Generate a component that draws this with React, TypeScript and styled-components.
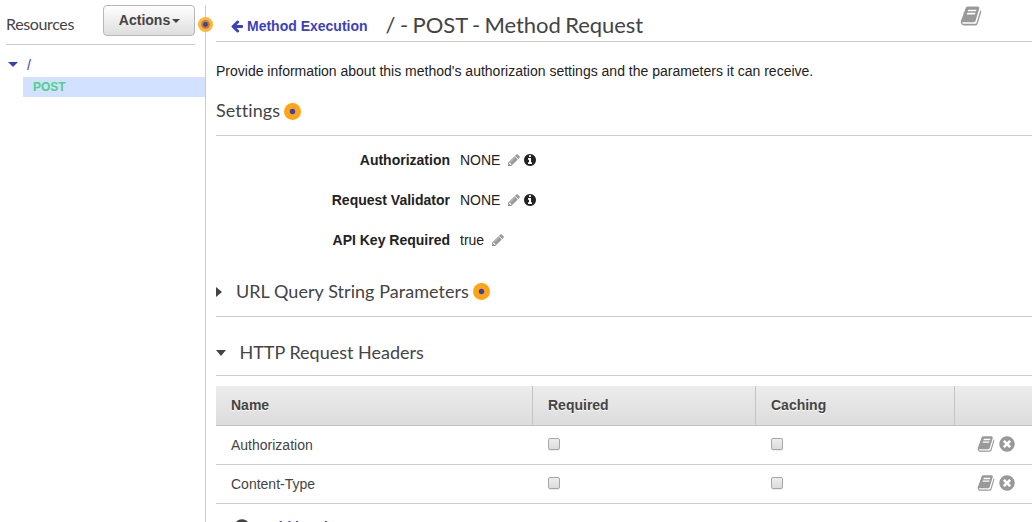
import React from 'react';
import styled, { createGlobalStyle } from 'styled-components';

const GlobalStyle = createGlobalStyle`
  * { box-sizing: border-box; }
  html, body { margin: 0; padding: 0; background: #fff; }
  body {
    font-family: "Liberation Sans", Arial, sans-serif;
    font-size: 14px;
    line-height: 20px;
    color: #222;
    overflow: hidden;
  }
`;

const Page = styled.div`
  display: flex;
  width: 100%;
  height: 522px;
  overflow: hidden;
`;

const Sidebar = styled.aside`
  width: 205px;
  flex: none;
  padding-top: 5px;
`;

const SidebarHeader = styled.div`
  display: flex;
  justify-content: space-between;
  align-items: flex-start;
  height: 40px;
  margin: 0 10px 0 6px;
  border-bottom: 1px solid #ccc;
`;

const SidebarTitle = styled.div`
  font: 16px/20px Lato, sans-serif;
  letter-spacing: -0.36px;
  color: #444;
  padding-top: 9px;
`;

const ActionsButton = styled.button`
  display: flex;
  align-items: center;
  justify-content: center;
  gap: 2px;
  width: 92px;
  height: 31px;
  padding: 0 0 2px 1px;
  border: 1px solid #b8b8b8;
  border-radius: 4px;
  background: linear-gradient(#fff, #dedede);
  font: bold 14px/20px "Liberation Sans", Arial, sans-serif;
  color: #444;

  svg { margin-top: 3px; }
`;

const Tree = styled.div`
  padding-top: 9px;
`;

const TreeRoot = styled.div`
  display: flex;
  align-items: center;
  gap: 9px;
  height: 23px;
  padding: 0 0 2px 8px;
  color: #3b3fb6;
  font-size: 14px;
`;

const TreeLeaf = styled.div`
  height: 20px;
  margin-left: 23px;
  padding-left: 10px;
  background: #d1e1ff;
  color: #4dd08a;
  font-weight: bold;
  font-size: 12px;
  line-height: 20px;
`;

const Divider = styled.div`
  position: relative;
  flex: none;
  width: 1px;
  margin-top: 5px;
  background: #ccc;
`;

const DividerDot = styled.div`
  position: absolute;
  left: -7px;
  top: 12px;
  display: flex;
`;

const Main = styled.main`
  flex: 1;
  min-width: 0;
  padding-left: 10px;
`;

const TitleBar = styled.header`
  display: flex;
  align-items: flex-start;
  height: 42px;
  padding: 0 50px 0 14px;
  border-bottom: 1px solid #ccc;
`;

const BackLink = styled.a`
  display: flex;
  align-items: center;
  gap: 3px;
  margin-top: 16px;
  color: #3b3fc0;
  font-weight: bold;
`;

const Title = styled.h1`
  flex: 1;
  margin: 10px 0 0 18px;
  font: 22px/30px Lato, sans-serif;
  letter-spacing: -0.08px;
  word-spacing: -1px;
  color: #444;
`;

const TitleIcon = styled.span`
  display: flex;
  margin-top: 5px;
`;

const Intro = styled.p`
  margin: 19px 0 0;
`;

const SectionTitle = styled.h2<{ $top: number; $height: number; $spacing?: number }>`
  display: flex;
  align-items: flex-start;
  gap: 4px;
  height: ${(p) => p.$height}px;
  margin: 0;
  padding-top: ${(p) => p.$top}px;
  border-bottom: 1px solid #ccc;
  font: 18px/24px Lato, sans-serif;
  letter-spacing: ${(p) => p.$spacing ?? 0}px;
  color: #444;
`;

const Glyph = styled.span<{ $top?: number; $right?: number }>`
  display: flex;
  margin-top: ${(p) => p.$top ?? 0}px;
  margin-right: ${(p) => p.$right ?? 0}px;
`;

const Settings = styled.div`
  display: flex;
  flex-direction: column;
  gap: 20px;
  padding: 14px 0 16px;
`;

const Setting = styled.div`
  display: flex;
  align-items: center;
  height: 20px;
`;

const SettingLabel = styled.div`
  width: 234px;
  margin-right: 10px;
  text-align: right;
  font-weight: bold;
`;

const SettingIcons = styled.span`
  display: flex;
  gap: 2px;
  margin-left: 7px;
`;

const Table = styled.div`
  margin-top: 10px;
  color: #444;
`;

const Row = styled.div<{ $head?: boolean }>`
  display: grid;
  grid-template-columns: 316px 223px 199px 1fr;
  height: ${(p) => (p.$head ? 40 : 39)}px;
  border-bottom: 1px solid ${(p) => (p.$head ? '#c4c4c4' : '#ccc')};
  background: ${(p) => (p.$head ? 'linear-gradient(#ececec, #dcdcdc)' : 'none')};
  font-weight: ${(p) => (p.$head ? 'bold' : 'normal')};
  text-shadow: ${(p) => (p.$head ? '0 1px 0 #fff' : 'none')};
  line-height: ${(p) => (p.$head ? 18 : 20)}px;
`;

const Cell = styled.div<{ $line?: boolean; $head?: boolean }>`
  display: flex;
  align-items: center;
  padding-left: ${(p) => (p.$line ? 15 : 16)}px;
  padding-bottom: ${(p) => (p.$head ? 2 : 0)}px;
  border-left: ${(p) => (p.$line ? '1px solid #c4c4c4' : 'none')};

  &:first-child { padding-left: 15px; }
`;

const RowIcons = styled.div`
  display: flex;
  align-items: center;
  justify-content: flex-end;
  gap: 3px;
  padding: 0 16px 2px 0;
`;

const Check = styled.span`
  width: 12px;
  height: 12px;
  margin-bottom: 2px;
  border: 1px solid #a6a6a6;
  border-radius: 2px;
  background: linear-gradient(#ededed, #dcdcdc);
  box-shadow: 0 1px 0 rgba(0, 0, 0, 0.08);
`;

const AddRow = styled.div`
  display: flex;
  align-items: center;
  gap: 13px;
  height: 20px;
  margin: 13px 0 0 17px;
  color: #3b3fc0;
  font-weight: bold;
`;

const CIRCLE =
  'M1664 896q0 209-103 385.5t-279.5 279.5-385.5 103-385.5-103-279.5-279.5-103-385.5 103-385.5 279.5-279.5 385.5-103 385.5 103 279.5 279.5 103 385.5z';

const PATHS = {
  book: 'M1703 478q40 57 18 129l-275 906q-19 64-76.5 107.5t-122.5 43.5h-923q-77 0-148.5-53.5t-99.5-131.5q-24-67-2-127 0-4 3-27t4-37q1-8-3-21.5t-3-19.5q2-11 8-21t16.5-23.5 16.5-23.5q23-38 45-91.5t30-91.5q3-10 .5-30t-.5-28q3-11 17-28t17-23q21-36 42-92t25-90q1-9-2.5-32t.5-28q4-13 22-30.5t22-22.5q19-26 42.5-84.5t27.5-96.5q1-8-3-25.5t-2-26.5q2-8 9-18t18-23 17-21q8-12 16.5-30.5t15-35 16-36 19.5-32 26.5-23.5 36-11.5 47.5 5.5l-1 3q38-9 51-9h761q74 0 114 56t18 130l-274 906q-36 119-71.5 153.5t-128.5 34.5h-869q-27 0-38 15-11 16-1 43 24 70 144 70h923q29 0 56-15.5t35-41.5l300-987q7-22 5-57 38 15 59 43zm-1064 2q-4 13 2 22.5t20 9.5h608q13 0 25.5-9.5t16.5-22.5l21-64q4-13-2-22.5t-20-9.5h-608q-13 0-25.5 9.5t-16.5 22.5zm-83 256q-4 13 2 22.5t20 9.5h608q13 0 25.5-9.5t16.5-22.5l21-64q4-13-2-22.5t-20-9.5h-608q-13 0-25.5 9.5t-16.5 22.5z',
  pencil:
    'M491 1536l91-91-235-235-91 91v107h128v128h107zm523-928q0-22-22-22-10 0-17 7l-542 542q-7 7-7 17 0 22 22 22 10 0 17-7l542-542q7-7 7-17zm-54-192l416 416-832 832h-416v-416zm683 96q0 53-37 90l-166 166-416-416 166-165q36-38 90-38 53 0 91 38l235 234q37 39 37 91z',
  info:
    CIRCLE +
    'M1152 1376v-160q0-14-9-23t-23-9h-96v-512q0-14-9-23t-23-9h-320q-14 0-23 9t-9 23v160q0 14 9 23t23 9h96v320h-96q-14 0-23 9t-9 23v160q0 14 9 23t23 9h448q14 0 23-9t9-23zM1024 480v-160q0-14-9-23t-23-9h-192q-14 0-23 9t-9 23v160q0 14 9 23t23 9h192q14 0 23-9t9-23z',
  remove:
    CIRCLE +
    'M1277 1122q0-26-19-45l-181-181 181-181q19-19 19-45 0-27-19-46l-90-90q-19-19-46-19-26 0-45 19l-181 181-181-181q-19-19-45-19-27 0-46 19l-90 90q-19 19-19 46 0 26 19 45l181 181-181 181q-19 19-19 45 0 27 19 46l90 90q19 19 46 19 26 0 45-19l181-181 181 181q19 19 45 19 27 0 46-19l90-90q19-19 19-46z',
  plus:
    CIRCLE +
    'M1344 960v-128q0-26-19-45t-45-19h-256v-256q0-26-19-45t-45-19h-128q-26 0-45 19t-19 45v256h-256q-26 0-45 19t-19 45v128q0 26 19 45t45 19h256v256q0 26 19 45t45 19h128q26 0 45-19t19-45v-256h256q26 0 45-19t19-45z',
  arrow:
    'M1664 896v128q0 53-32.5 90.5t-84.5 37.5h-704l293 294q38 36 38 90t-38 90l-75 76q-37 37-90 37-52 0-91-37l-651-652q-37-37-37-90 0-52 37-91l651-650q38-38 91-38 52 0 90 38l75 74q38 38 38 91t-38 91l-293 293h704q52 0 84.5 37.5t32.5 90.5z',
};

function Icon({ name, size = 14, color = '#999' }: { name: keyof typeof PATHS; size?: number; color?: string }) {
  return (
    <svg width={size} height={size} viewBox="0 0 1792 1792" fill={color} fillRule="evenodd">
      <path d={PATHS[name]} />
    </svg>
  );
}

function Caret({ dir, w, h, color }: { dir: 'down' | 'right'; w: number; h: number; color: string }) {
  const points = dir === 'down' ? `0,0 ${w},0 ${w / 2},${h}` : `0,0 ${w},${h / 2} 0,${h}`;
  return (
    <svg width={w} height={h} fill={color}>
      <polygon points={points} />
    </svg>
  );
}

function Hotspot({ size = 17, soft = false }: { size?: number; soft?: boolean }) {
  return (
    <svg width={size} height={size} viewBox="0 0 17 17">
      <circle cx="8.5" cy="8.5" r="8.5" fill={soft ? '#ffb53c' : '#ffa412'} />
      {soft && <circle cx="8.5" cy="8.5" r="5" fill="#c08030" />}
      <circle cx="8.5" cy="8.5" r="2.7" fill="#3b3fb6" />
    </svg>
  );
}

const settings = [
  { label: 'Authorization', value: 'NONE', info: true },
  { label: 'Request Validator', value: 'NONE', info: true },
  { label: 'API Key Required', value: 'true', info: false },
];

const headers = ['Authorization', 'Content-Type'];

export default function App() {
  return (
    <>
      <GlobalStyle />
      <Page>
        <Sidebar>
          <SidebarHeader>
            <SidebarTitle>Resources</SidebarTitle>
            <ActionsButton>
              Actions
              <Caret dir="down" w={8} h={4} color="#444" />
            </ActionsButton>
          </SidebarHeader>
          <Tree>
            <TreeRoot>
              <Caret dir="down" w={10} h={5} color="#3b3fb6" />
              /
            </TreeRoot>
            <TreeLeaf>POST</TreeLeaf>
          </Tree>
        </Sidebar>
        <Divider>
          <DividerDot>
            <Hotspot size={15} soft />
          </DividerDot>
        </Divider>
        <Main>
          <TitleBar>
            <BackLink>
              <Icon name="arrow" color="#3b3fc0" />
              Method Execution
            </BackLink>
            <Title>/ - POST - Method Request</Title>
            <TitleIcon>
              <Icon name="book" size={22} />
            </TitleIcon>
          </TitleBar>
          <Intro>Provide information about this method's authorization settings and the parameters it can receive.</Intro>
          <SectionTitle $top={17} $height={55} $spacing={0.06}>
            Settings
            <Glyph $top={5}>
              <Hotspot />
            </Glyph>
          </SectionTitle>
          <Settings>
            {settings.map((s) => (
              <Setting key={s.label}>
                <SettingLabel>{s.label}</SettingLabel>
                {s.value}
                <SettingIcons>
                  <Icon name="pencil" />
                  {s.info && <Icon name="info" color="#222" />}
                </SettingIcons>
              </Setting>
            ))}
          </Settings>
          <SectionTitle $top={13} $height={51} $spacing={0.05}>
            <Glyph $top={8} $right={10}>
              <Caret dir="right" w={6} h={10} color="#444" />
            </Glyph>
            URL Query String Parameters
            <Glyph $top={4}>
              <Hotspot />
            </Glyph>
          </SectionTitle>
          <SectionTitle $top={23} $height={59}>
            <Glyph $top={10} $right={9.5}>
              <Caret dir="down" w={10} h={6} color="#444" />
            </Glyph>
            HTTP Request Headers
          </SectionTitle>
          <Table>
            <Row $head>
              <Cell $head>Name</Cell>
              <Cell $head $line>Required</Cell>
              <Cell $head $line>Caching</Cell>
              <Cell $head $line />
            </Row>
            {headers.map((name) => (
              <Row key={name}>
                <Cell>{name}</Cell>
                <Cell>
                  <Check />
                </Cell>
                <Cell>
                  <Check />
                </Cell>
                <RowIcons>
                  <Icon name="book" size={18} />
                  <Icon name="remove" size={18} />
                </RowIcons>
              </Row>
            ))}
          </Table>
          <AddRow>
            <Icon name="plus" size={18} color="#444" />
            Add header
          </AddRow>
        </Main>
      </Page>
    </>
  );
}
